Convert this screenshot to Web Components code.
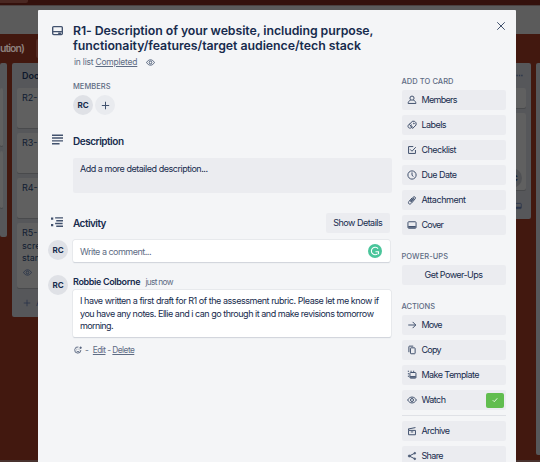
<!DOCTYPE html>
<html lang="en">
<head>
<meta charset="utf-8">
<title>Card details</title>
<style>
html,body{margin:0;height:462px;overflow:hidden}
body{font-family:Inter,"Liberation Sans",sans-serif;font-size:9px;color:#172b4d}
</style>
</head>
<body>
<trello-page></trello-page>
<script>
const ICONS = {
  card:'<rect x="1" y="2.300" width="14" height="11.700" rx="1.500" stroke-width="2"/><path d="M1.500 9.800h13" stroke-width="1.800"/><path d="M9 12h4" stroke-width="2"/>',
  lines:'<path d="M0 1.800h16M0 5.900h16M0 10h16M0 14.100h11" stroke-width="2"/>',
  activity:'<path d="M5.500 2.500h10.500M7 6.300h9M5.500 10h10M7 13.700h9" stroke-width="1.900"/><path d="M0 3.500h3M0 12.200h3" stroke-width="3"/>',
  eye:'<path d="M1 8c3.600-6.300 10.400-6.300 14 0-3.600 6.300-10.400 6.300-14 0z"/><circle cx="8" cy="8" r="2.400"/>',
  close:'<path d="M2 2l12 12M14 2L2 14"/>',
  user:'<circle cx="8" cy="5" r="3.300"/><path d="M6 8.200c-2.800.8-4.200 2.800-4.200 5.300h12.400c0-2.500-1.400-4.500-4.200-5.300"/>',
  label:'<path d="M4 7l4.500-5H12l2.500 2.500v3.500L9 13.500z"/><path d="M4.500 6C0 8.500 1 13.500 5.500 13c2-.5 3-2 2.500-3.500M5 9.500l3-2"/><circle cx="11" cy="5.500" r=".7"/>',
  check:'<path d="M13.500 8v5.500h-11v-11H10"/><path d="M5 7l3 3 6-6.500"/>',
  clock:'<circle cx="8" cy="8" r="6.600"/><path d="M8 3.800V8.500l2.300 1.800"/>',
  clip:'<path d="M4.500 9.500l5.300-6c2-2 5 .3 3.200 2.700l-6 7c-2.800 3-6.200.4-4-2.700l5-5.700"/><path d="M5.700 11.200l5.300-6" stroke-width="2"/>',
  cover:'<rect x="1.500" y="2.800" width="13" height="10.400" rx="1.300"/><path d="M2 11h12" stroke-width="3"/>',
  arrow:'<path d="M2 8h12M9 3l5 5-5 5"/>',
  copy:'<rect x="5.500" y="4.500" width="7.500" height="9.500" rx="1"/><path d="M3 11.500V2.800c0-.7.300-1 1-1h6"/>',
  template:'<rect x="4.700" y="4" width="9.600" height="9" rx="1"/><path d="M5 11h9" stroke-width="2.600"/><path d="M1.300 2h2M5.500 2h2M9.500 2h2M2.200 5v2M2.200 9v2"/>',
  archive:'<path d="M2.500 7h11v7h-11zM2 4.800L13.500 2.500M6 9.500h4M2.500 7V4.500"/>',
  share:'<path d="M12.500 3.500L3.500 8l9 4.500"/><circle cx="12.500" cy="3.500" r="1.300"/><circle cx="3.500" cy="8" r="1.500"/><circle cx="12.500" cy="12.500" r="1.300"/>',
  plus:'<path d="M8 1.500v13M1.500 8h13"/>',
  tick:'<path d="M2 8.500l4 4 8-9"/>',
  smile:'<path d="M13.800 8a6.200 6.200 0 1 1-5-6"/><path d="M4.800 9.500c1.200 2.800 5 2.800 6.200 0M5.600 5.500v1.500M10 5.500v1.500M13.300 1v5M10.800 3.500h5"/>',
  dots:'<path d="M1 8h3M6.500 8h3M12 8h3" stroke-width="3"/>'
};

class UiIcon extends HTMLElement{
  connectedCallback(){
    const s=this.getAttribute('size')||10;
    this.attachShadow({mode:'open'}).innerHTML=`<style>:host{display:block;flex:none;width:${s}px;height:${s}px;color:#42526e}
      svg{display:block;width:100%;height:100%;fill:none;stroke:currentColor;stroke-width:${this.getAttribute('stroke')||1.6};overflow:visible}</style>
      <svg viewBox="0 0 16 16">${ICONS[this.getAttribute('name')]}</svg>`;
  }
}

/* A single run of text, tracked to a given width. */
class FitText extends HTMLElement{
  connectedCallback(){
    this.attachShadow({mode:'open'}).innerHTML='<style>:host{display:inline-block;white-space:nowrap}</style><slot></slot>';
    const r=document.createRange(); r.selectNodeContents(this);
    const n=this.textContent.length-1, gap=this.getAttribute('w')-r.getBoundingClientRect().width;
    if(n>0){this.style.letterSpacing=gap/n+'px';this.style.marginRight=-gap/n+'px';}
  }
}

class UiAvatar extends HTMLElement{
  connectedCallback(){
    this.attachShadow({mode:'open'}).innerHTML=`<style>:host{display:flex;flex:none;width:20px;height:20px;border-radius:50%;align-items:center;justify-content:center;background:#dfe1e6;font-size:8px;font-weight:700;color:#172b4d}
    :host([light]){background:#e9ebef}</style><slot></slot>`;
  }
}

class SideButton extends HTMLElement{
  connectedCallback(){
    const i=this.getAttribute('icon');
    this.attachShadow({mode:'open'}).innerHTML=`<style>:host{display:flex;box-sizing:border-box;width:104.500px;height:20px;margin-bottom:5px;padding:0 2.500px 0 5px;align-items:center;border-radius:2px;background:#ebecf0;line-height:20px;font-size:9px}
    :host([center]){padding-right:5px}
    ui-icon{margin-right:5px} .t{flex:1} :host([center]) .t{text-align:center}</style>
    ${i?`<ui-icon name="${i}" size="10"></ui-icon>`:''}<span class="t"><fit-text w="${this.getAttribute('w')}">${this.getAttribute('label')}</fit-text></span><slot></slot>`;
  }
}

class SideHeading extends HTMLElement{
  connectedCallback(){
    this.attachShadow({mode:'open'}).innerHTML='<style>:host{display:block;height:10px;line-height:10px;padding-top:1px;margin-bottom:3px;font-size:7.500px;font-weight:500;color:#5e6c84}</style><slot></slot>';
  }
}

class CardSidebar extends HTMLElement{
  connectedCallback(){
    this.attachShadow({mode:'open'}).innerHTML=`<style>:host{display:block;width:104.500px}
    section{margin-bottom:16px} section.a{margin-bottom:0}
    .on{display:flex;width:18px;height:15px;border-radius:2px;background:#61bd4f;align-items:center;justify-content:center}
    .on ui-icon{color:#fff;margin:0} hr{border:0;height:1px;background:#dfe1e6;margin:-.500px 0 5px}</style>
    <section><side-heading><fit-text w="52">ADD TO CARD</fit-text></side-heading>
      <side-button icon="user" label="Members" w="36"></side-button>
      <side-button icon="label" label="Labels" w="25"></side-button>
      <side-button icon="check" label="Checklist" w="35"></side-button>
      <side-button icon="clock" label="Due Date" w="35.500"></side-button>
      <side-button icon="clip" label="Attachment" w="44.500"></side-button>
      <side-button icon="cover" label="Cover" w="22.500"></side-button></section>
    <section><side-heading><fit-text w="46.500">POWER-UPS</fit-text></side-heading>
      <side-button center label="Get Power-Ups" w="58.500"></side-button></section>
    <section class="a"><side-heading><fit-text w="33.500">ACTIONS</fit-text></side-heading>
      <side-button icon="arrow" label="Move" w="21"></side-button>
      <side-button icon="copy" label="Copy" w="20"></side-button>
      <side-button icon="template" label="Make Template" w="58"></side-button>
      <side-button icon="eye" label="Watch" w="24.500"><span class="on"><ui-icon name="tick" size="6" stroke="2.200"></ui-icon></span></side-button>
      <hr>
      <side-button icon="archive" label="Archive" w="28.500"></side-button>
      <side-button icon="share" label="Share" w="22"></side-button></section>`;
  }
}

class CardMain extends HTMLElement{
  connectedCallback(){
    this.attachShadow({mode:'open'}).innerHTML=`<style>:host{display:block;width:344px}
    .row{display:flex;align-items:flex-start}
    .g{width:25px;flex:none;display:flex} .g ui-icon{margin-left:4px}
    h1,h2{margin:0;font-weight:600;color:#172b4d}
    h1{font-size:12.300px;line-height:15px} h1 fit-text{display:block}
    h2{font-size:10px;line-height:14px}
    .sub{display:flex;align-items:center;height:12px;line-height:12px;margin:3px 0 0 26px;font-size:8.500px;color:#5e6c84}
    .sub ui-icon{margin-left:8px} u{text-underline-offset:1px}
    .mem{margin:14px 0 0 25px;height:10px;line-height:10px;font-size:7.500px;font-weight:500;color:#5e6c84}
    .avs{display:flex;gap:2px;margin:3px 0 0 25px}
    .desc{box-sizing:border-box;height:34.500px;width:319px;margin:10px 0 0 25px;padding:4px 7px;line-height:14px;background:#ebecf0;border-radius:2px;font-size:9px}
    .act{margin-top:19.500px;height:21px;align-items:center} .act h2{flex:1}
    .btn{width:64px;height:20px;line-height:20px;margin-right:2px;text-align:center;background:#ebecf0;border-radius:2px;font-size:9px}
    .box{box-sizing:border-box;background:#fff;border-radius:2px;box-shadow:0 0 0 .5px #dfe1e6,0 .7px 1px #c1c7d0;font-size:9px}
    .in{display:flex;align-items:center;width:316.500px;height:22px;padding:0 8px 0 7px;color:#5e6c84;justify-content:space-between}
    .gr{display:block;width:14px;height:14px}
    .msg{width:317.500px;height:47px;padding:5px 7px;line-height:12.500px} .msg fit-text{display:block}
    .name{height:13px;line-height:13px;font-size:9px} .name b{font-weight:600} .name span{margin-left:5px;font-size:8.300px;color:#5e6c84}
    .foot{display:flex;align-items:center;margin:7px 0 0 26px;height:12px;line-height:12px;font-size:8.300px;color:#5e6c84} .foot fit-text{margin-left:3px}
    </style>
    <div class="row"><div class="g"><ui-icon name="card" size="11" style="margin-top:2px"></ui-icon></div>
      <h1><fit-text w="300.500">R1- Description of your website, including purpose,</fit-text><fit-text w="288">functionaity/features/target audience/tech stack</fit-text></h1></div>
    <div class="sub"><fit-text w="63.500">in list <u>Completed</u></fit-text><ui-icon name="eye" size="9"></ui-icon></div>
    <div class="mem"><fit-text w="37.500">MEMBERS</fit-text></div>
    <div class="avs"><ui-avatar>RC</ui-avatar><ui-avatar light><ui-icon name="plus" size="9" stroke="1.800"></ui-icon></ui-avatar></div>
    <div class="row" style="margin-top:19px"><div class="g"><ui-icon name="lines" size="11"></ui-icon></div><h2><fit-text w="51">Description</fit-text></h2></div>
    <div class="desc"><fit-text w="128">Add a more detailed description...</fit-text></div>
    <div class="row act"><div class="g"><ui-icon name="activity" size="12" style="margin:-1px 0 0 3px"></ui-icon></div><h2><fit-text w="33.500">Activity</fit-text></h2><div class="btn"><fit-text w="49.500">Show Details</fit-text></div></div>
    <div class="row" style="margin-top:7px"><div class="g"><ui-avatar>RC</ui-avatar></div>
      <div class="box in"><fit-text w="71.500">Write a comment...</fit-text>
      <svg class="gr" viewBox="0 0 14 14"><circle cx="7" cy="7" r="7" fill="#4ac59b"/><path d="M10 4.700A3.700 3.700 0 1 0 9.500 9.800M7.500 7.800h3v2.500" fill="none" stroke="#fff" stroke-width="1.100"/></svg></div></div>
    <div class="row" style="margin-top:13px"><div class="g"><ui-avatar>RC</ui-avatar></div>
      <div><div class="name"><b><fit-text w="67.500">Robbie Colborne</fit-text></b><span><fit-text w="28">just now</fit-text></span></div>
      <div class="box msg" style="margin-top:2px"><fit-text w="299">I have written a first draft for R1 of the assessment rubric. Please let me know if</fit-text><fit-text w="294">you have any notes. Ellie and i can go through it and make revisions tomorrow</fit-text><fit-text w="33.500">morning.</fit-text></div></div></div>
    <div class="foot"><ui-icon name="smile" size="8"></ui-icon><fit-text w="3">-</fit-text><fit-text w="42" style="margin-left:4px"><u>Edit</u> - <u>Delete</u></fit-text></div>`;
  }
}

class CardModal extends HTMLElement{
  connectedCallback(){
    this.attachShadow({mode:'open'}).innerHTML=`<style>:host{display:flex;box-sizing:border-box;width:478px;height:460px;background:#f4f5f7;padding:13px 10px 0;overflow:hidden;border-radius:1px 1px 0 0}
    card-sidebar{margin:53px 0 0 9.500px} .x{position:absolute;right:10px;top:11px}</style>
    <card-main></card-main><card-sidebar></card-sidebar><ui-icon class="x" name="close" size="10"></ui-icon>`;
  }
}

class BoardList extends HTMLElement{
  connectedCallback(){
    this.attachShadow({mode:'open'}).innerHTML=`<style>:host{display:block;flex:none;box-sizing:border-box;background:#56575a;border-radius:2px;padding:25px 5px 0;position:relative;overflow:hidden}</style><slot></slot>`;
  }
}
class BoardCard extends HTMLElement{
  connectedCallback(){
    this.attachShadow({mode:'open'}).innerHTML=`<style>:host{display:block;box-sizing:border-box;height:40px;margin-bottom:5px;padding:4px 5px;background:#606060;border-radius:2px;box-shadow:0 1px 0 #494a4c;line-height:12.500px;color:#101c30;white-space:nowrap}</style><slot></slot>`;
  }
}

class TrelloPage extends HTMLElement{
  connectedCallback(){
    this.attachShadow({mode:'open'}).innerHTML=`<style>:host{display:block;position:relative;width:540px;height:462px;background:#42180f;overflow:hidden}
    .nav{height:5px;background:#34110c} .nav i{display:block;width:28px;height:3px;background:#4a2822;border-radius:0 0 2px 0} .bar{height:27.500px;background:#5b5b5b;border-top:1px solid #4a4140}
    .head{display:flex;height:29.500px;align-items:center;font-size:10.500px;font-weight:600;color:#8d807d}
    .head i{margin-left:11px;width:30px;height:19px;background:#522b23;border-radius:2px}
    .cols{display:flex;gap:5px;align-items:flex-start}
    .ttl{position:absolute;left:10px;top:7px;font-weight:600;color:#0d172b;line-height:12px}
    .add{display:flex;align-items:center;gap:5px;margin:9px 6px;color:#29344a;white-space:nowrap} .add ui-icon,board-card ui-icon{color:#29344a}
    .foot{position:absolute;left:0;right:0;bottom:0;height:2px;background:#49332f}
    card-modal{position:absolute;left:38px;top:10px}
    .dots{position:absolute;right:8px;top:9px} .rc{position:absolute;right:9px;top:105px;width:20px;height:20px;border-radius:50%;background:#505154;line-height:20px;text-align:center;font-size:8px;font-weight:700;color:#0d172b}
    .cv{position:absolute;right:9px;bottom:9px}
    .dots,.cv{color:#29344a}</style>
    <div class="nav"><i></i></div><div class="bar"></div>
    <div class="head"><fit-text w="25">ution)</fit-text><i></i></div>
    <div class="cols">
      <board-list style="width:7px;height:174px;padding-left:0"><board-card style="width:2.500px;padding:0;height:58px"></board-card><board-card style="width:2.500px;padding:0;height:57px"></board-card></board-list>
      <board-list style="width:140px;height:254px"><span class="ttl">Doc</span>
        <board-card>R2-</board-card><board-card>R3-</board-card><board-card>R4-</board-card>
        <board-card style="height:65px">R5-<br>scre<br>stan<ui-icon name="eye" size="9" style="margin:3px 0 0 1px"></ui-icon></board-card>
        <div class="add"><ui-icon name="plus" size="8"></ui-icon>Add</div></board-list>
      <board-list style="width:374px;height:156px"><ui-icon class="dots" name="dots" size="7"></ui-icon>
        <board-card style="height:20px"></board-card><board-card style="height:77px"></board-card><span class="rc">RC</span><ui-icon class="cv" name="cover" size="8"></ui-icon></board-list>
      <board-list style="width:20px;height:392px"></board-list>
    </div>
    <div class="foot"></div><card-modal></card-modal>`;
  }
}
customElements.define('trello-page',TrelloPage);
customElements.define('board-list',BoardList);
customElements.define('board-card',BoardCard);
customElements.define('card-modal',CardModal);
customElements.define('card-main',CardMain);
customElements.define('card-sidebar',CardSidebar);
customElements.define('side-heading',SideHeading);
customElements.define('side-button',SideButton);
customElements.define('ui-avatar',UiAvatar);
customElements.define('ui-icon',UiIcon);
customElements.define('fit-text',FitText);
</script>
</body>
</html>
